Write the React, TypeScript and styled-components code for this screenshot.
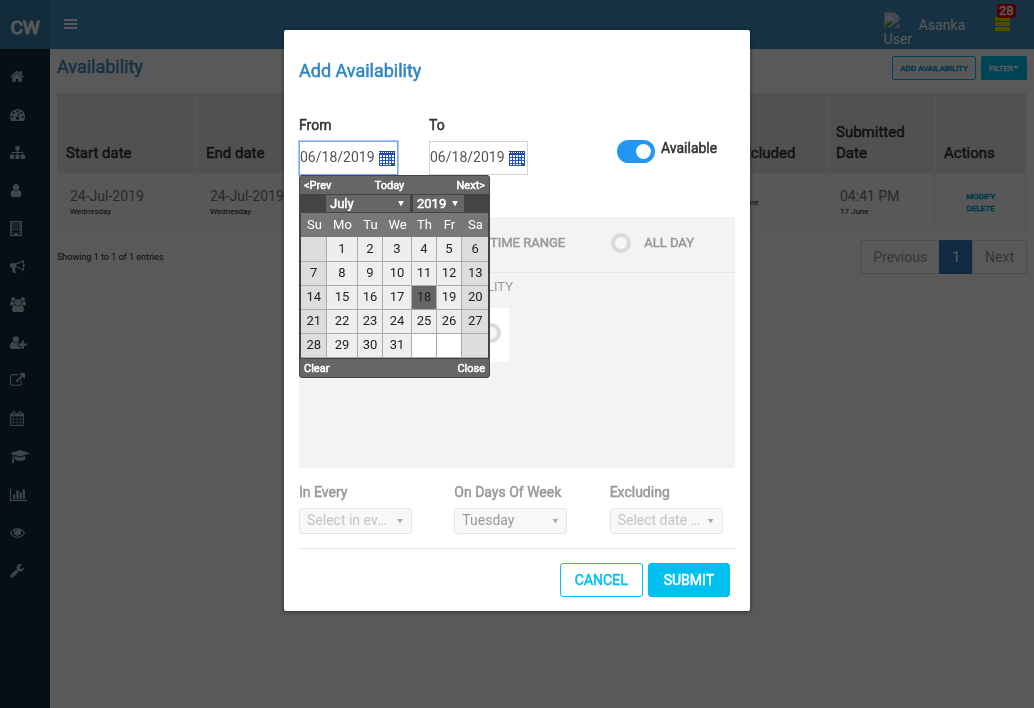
import React from 'react';
import styled, { createGlobalStyle, css } from 'styled-components';

const GlobalStyle = createGlobalStyle`
  *, *::before, *::after { box-sizing: border-box; }
  body {
    margin: 0;
    font-family: Roboto, "Liberation Sans", sans-serif;
    font-size: 14px;
    line-height: 20px;
    color: #333;
    background: #fff;
  }
  button, input, select { font-family: inherit; }
  a { text-decoration: none; }
`;

/* Regular weight thickened by a stroke, used for headings and labels. */
const heavy = css`
  -webkit-text-stroke: 0.5px currentColor;
`;

/* ---------- icons ---------- */

type Glyph = { box: string; w: number; d: string };

const glyphs: Record<string, Glyph> = {
  Home: { box: '64 0 1664 1792', w: 14, d: 'M1472 992v480q0 26-19 45t-45 19h-384v-384h-256v384h-384q-26 0-45-19t-19-45v-480q0-1 .5-3t.5-3l575-474 575 474q1 2 1 6zm223-69l-62 74q-8 9-21 11h-3q-13 0-21-7l-692-577-692 577q-12 8-24 7-13-2-21-11l-62-74q-8-10-7-23.5t11-21.5l719-599q32-26 76-26t76 26l244 204v-195q0-14 9-23t23-9h192q14 0 23 9t9 23v408l219 182q10 8 11 21.5t-7 23.5z' },
  Dashboard: { box: '0 0 1792 1792', w: 15, d: 'M384 1152q0-53-37.5-90.5t-90.5-37.5-90.5 37.5-37.5 90.5 37.5 90.5 90.5 37.5 90.5-37.5 37.5-90.5zm192-448q0-53-37.5-90.5t-90.5-37.5-90.5 37.5-37.5 90.5 37.5 90.5 90.5 37.5 90.5-37.5 37.5-90.5zm428 481l101-382q6-26-7.5-48.5t-38.5-29.5-48 6.5-30 39.5l-101 382q-60 5-107 43.5t-63 98.5q-20 77 20 146t117 89 146-20 89-117q16-60-6-117t-72-91zm660-33q0-53-37.5-90.5t-90.5-37.5-90.5 37.5-37.5 90.5 37.5 90.5 90.5 37.5 90.5-37.5 37.5-90.5zm-640-640q0-53-37.5-90.5t-90.5-37.5-90.5 37.5-37.5 90.5 37.5 90.5 90.5 37.5 90.5-37.5 37.5-90.5zm448 192q0-53-37.5-90.5t-90.5-37.5-90.5 37.5-37.5 90.5 37.5 90.5 90.5 37.5 90.5-37.5 37.5-90.5zm320 448q0 261-141 483-19 29-54 29h-1402q-35 0-54-29-141-221-141-483 0-182 71-348t191-286 286-191 348-71 348 71 286 191 191 286 71 348z' },
  Structure: { box: '0 0 1792 1792', w: 15, d: 'M1792 1248v320q0 40-28 68t-68 28h-320q-40 0-68-28t-28-68v-320q0-40 28-68t68-28h96v-192h-512v192h96q40 0 68 28t28 68v320q0 40-28 68t-68 28h-320q-40 0-68-28t-28-68v-320q0-40 28-68t68-28h96v-192h-512v192h96q40 0 68 28t28 68v320q0 40-28 68t-68 28h-320q-40 0-68-28t-28-68v-320q0-40 28-68t68-28h96v-192q0-52 38-90t90-38h512v-192h-96q-40 0-68-28t-28-68v-320q0-40 28-68t68-28h320q40 0 68 28t28 68v320q0 40-28 68t-68 28h-96v192h512q52 0 90 38t38 90v192h96q40 0 68 28t28 68z' },
  Profile: { box: '256 0 1280 1792', w: 12, d: 'M1536 1399q0 109-62.5 187t-150.5 78h-854q-88 0-150.5-78t-62.5-187q0-85 8.5-160.5t31.5-152 58.5-131 94-89 134.5-34.5q131 128 313 128t313-128q76 0 134.5 34.5t94 89 58.5 131 31.5 152 8.5 160.5zm-256-887q0 159-112.5 271.5t-271.5 112.5-271.5-112.5-112.5-271.5 112.5-271.5 271.5-112.5 271.5 112.5 112.5 271.5z' },
  Sites: { box: '192 0 1408 1792', w: 12, d: 'M192 0h1408v1792h-1408zM380 150v1500h324v-210q0-32 32-32h320q32 0 32 32v210h324v-1500zM448 256h150v150h-150zM704 256h150v150h-150zM960 256h150v150h-150zM1200 256h150v150h-150zM448 512h150v150h-150zM704 512h150v150h-150zM960 512h150v150h-150zM1200 512h150v150h-150zM448 768h150v150h-150zM704 768h150v150h-150zM960 768h150v150h-150zM1200 768h150v150h-150zM448 1024h150v150h-150zM704 1024h150v150h-150zM960 1024h150v150h-150zM1200 1024h150v150h-150zM448 1280h150v150h-150zM1200 1280h150v150h-150z' },
  Announcements: { box: '0 0 1792 1792', w: 15, d: 'M1664 640q53 0 90.5 37.5t37.5 90.5-37.5 90.5-90.5 37.5v384q0 52-38 90t-90 38q-417-347-812-380-58 19-91 66t-31 100.5 40 92.5q-20 33-23 65.5t6 58 33.5 55 48 50 61.5 50.5q-29 58-111.5 83t-168.5 11.5-132-55.5q-7-23-29.5-87.5t-32-94.5-23-89-15-101 3.5-98.5 22-110.5h-122q-66 0-113-47t-47-113v-192q0-66 47-113t113-47h480q435 0 896-384 52 0 90 38t38 90v384zm-128 604v-954q-394 302-768 343v270q377 42 768 341z' },
  Teams: { box: '0 0 1920 1792', w: 16, d: 'M593 896q-162 5-265 128h-134q-82 0-138-40.5t-56-118.5q0-353 124-353 6 0 43.5 21t97.5 42.5 119 21.5q67 0 133-23-5 37-5 66 0 159 81 256zm1071 637q0 120-73 189.5t-194 69.5h-874q-121 0-194-69.5t-73-189.5q0-53 3.5-103.5t14-109 26.5-108.5 43-97.5 62-81 85.5-53.5 111.5-20q10 0 43 21.5t73 48 107 48 135 21.5 135-21.5 107-48 73-48 43-21.5q61 0 111.5 20t85.5 53.5 62 81 43 97.5 26.5 108.5 14 109 3.5 103.5zm-1024-1277q0 106-75 181t-181 75-181-75-75-181 75-181 181-75 181 75 75 181zm704 384q0 159-112.5 271.5t-271.5 112.5-271.5-112.5-112.5-271.5 112.5-271.5 271.5-112.5 271.5 112.5 112.5 271.5zm576 225q0 78-56 118.5t-138 40.5h-134q-103-123-265-128 81-97 81-256 0-29-5-66 66 23 133 23 59 0 119-21.5t97.5-42.5 43.5-21q124 0 124 353zm-128-609q0 106-75 181t-181 75-181-75-75-181 75-181 181-75 181 75 75 181z' },
  Recruit: { box: '0 0 2048 1792', w: 17, d: 'M704 896q-159 0-271.5-112.5t-112.5-271.5 112.5-271.5 271.5-112.5 271.5 112.5 112.5 271.5-112.5 271.5-271.5 112.5zm960 128h352q13 0 22.5 9.5t9.5 22.5v192q0 13-9.5 22.5t-22.5 9.5h-352v352q0 13-9.5 22.5t-22.5 9.5h-192q-13 0-22.5-9.5t-9.5-22.5v-352h-352q-13 0-22.5-9.5t-9.5-22.5v-192q0-13 9.5-22.5t22.5-9.5h352v-352q0-13 9.5-22.5t22.5-9.5h192q13 0 22.5 9.5t9.5 22.5v352zm-736 224q0 52 38 90t90 38h256v238q-68 50-171 50h-874q-121 0-194-69t-73-190q0-53 3.5-103.5t14-109 26.5-108.5 43-97.5 62-81 85.5-53.5 111.5-20q19 0 39 17 79 61 154.5 91.5t164.5 30.5 164.5-30.5 154.5-91.5q20-17 39-17 132 0 217 96h-223q-52 0-90 38t-38 90v192z' },
  Links: { box: '0 0 1792 1792', w: 15, d: 'M1408 928v320q0 119-84.5 203.5t-203.5 84.5h-832q-119 0-203.5-84.5t-84.5-203.5v-832q0-119 84.5-203.5t203.5-84.5h704q14 0 23 9t9 23v64q0 14-9 23t-23 9h-704q-66 0-113 47t-47 113v832q0 66 47 113t113 47h832q66 0 113-47t47-113v-320q0-14 9-23t23-9h64q14 0 23 9t9 23zm384-864v512q0 26-19 45t-45 19-45-19l-176-176-652 652q-10 10-23 10t-23-10l-114-114q-10-10-10-23t10-23l652-652-176-176q-19-19-19-45t19-45 45-19h512q26 0 45 19t19 45z' },
  Calendar: { box: '64 0 1664 1792', w: 14, d: 'M192 1664h288v-288h-288v288zm352 0h320v-288h-320v288zm-352-352h288v-320h-288v320zm352 0h320v-320h-320v320zm-352-384h288v-288h-288v288zm736 736h320v-288h-320v288zm-384-736h320v-288h-320v288zm768 736h288v-288h-288v288zm-384-352h320v-320h-320v320zm-352-864v-288q0-13-9.5-22.5t-22.5-9.5h-64q-13 0-22.5 9.5t-9.5 22.5v288q0 13 9.5 22.5t22.5 9.5h64q13 0 22.5-9.5t9.5-22.5zm736 864h288v-320h-288v320zm-384-384h320v-288h-320v288zm384 0h288v-288h-288v288zm32-480v-288q0-13-9.5-22.5t-22.5-9.5h-64q-13 0-22.5 9.5t-9.5 22.5v288q0 13 9.5 22.5t22.5 9.5h64q13 0 22.5-9.5t9.5-22.5zm384-64v1280q0 52-38 90t-90 38h-1408q-52 0-90-38t-38-90v-1280q0-52 38-90t90-38h128v-96q0-66 47-113t113-47h64q66 0 113 47t47 113v96h384v-96q0-66 47-113t113-47h64q66 0 113 47t47 113v96h128q52 0 90 38t38 90z' },
  Training: { box: '0 0 2304 1792', w: 20, d: 'M1774 836l18 316q4 69-82 128t-235 93.5-323 34.5-323-34.5-235-93.5-82-128l18-316 574 181q22 7 48 7t48-7zm530-324q0 23-22 31l-1120 352q-4 1-10 1t-10-1l-652-206q-43 34-71 111.5t-34 178.5q63 36 63 109 0 69-58 107l58 433q2 14-8 25-9 11-24 11h-192q-15 0-24-11-10-11-8-25l58-433q-58-38-58-107 0-73 65-111 11-207 98-330l-333-104q-22-8-22-31t22-31l1120-352q4-1 10-1t10 1l1120 352q22 8 22 31z' },
  Reports: { box: '0 0 2048 1792', w: 17, d: 'M640 896v512h-256v-512h256zm384-512v1024h-256v-1024h256zm1024 1152v128h-2048v-1536h128v1408h1920zm-640-896v768h-256v-768h256zm384-384v1152h-256v-1152h256z' },
  Monitor: { box: '0 0 1792 1792', w: 15, d: 'M1664 960q-152-236-381-353 61 104 61 225 0 185-131.5 316.5t-316.5 131.5-316.5-131.5-131.5-316.5q0-121 61-225-229 117-381 353 133 205 333.5 326.5t434.5 121.5 434.5-121.5 333.5-326.5zm-720-384q0-20-14-34t-34-14q-125 0-214.5 89.5t-89.5 214.5q0 20 14 34t34 14 34-14 14-34q0-86 61-147t147-61q20 0 34-14t14-34zm848 384q0 34-20 69-140 230-376.5 368.5t-499.5 138.5-499.5-139-376.5-368q-20-35-20-69t20-69q140-229 376.5-368t499.5-139 499.5 139 376.5 368q20 35 20 69z' },
  Settings: { box: '64 0 1664 1792', w: 14, d: 'M448 1472q0-26-19-45t-45-19-45 19-19 45 19 45 45 19 45-19 19-45zm644-420l-682 682q-37 37-90 37-52 0-91-37l-106-108q-38-36-38-90 0-53 38-91l681-681q39 98 114.5 173.5t173.5 114.5zm634-435q0 39-23 106-47 134-164.5 217.5t-258.5 83.5q-185 0-316.5-131.5t-131.5-316.5 131.5-316.5 316.5-131.5q58 0 121.5 16.5t107.5 46.5q16 11 16 28t-16 28l-293 169v224l193 107q5-3 79-48.5t135.5-81 70.5-35.5q15 0 23.5 10t8.5 25z' },
};

const NavIcon = ({ glyph }: { glyph: Glyph }) => (
  <svg width={glyph.w} height="15" viewBox={glyph.box} fill="currentColor" fillRule="evenodd" aria-hidden="true">
    <path d={glyph.d} />
  </svg>
);

const MenuIcon = () => (
  <svg width="13" height="11" viewBox="0 0 13 11" fill="currentColor" aria-hidden="true">
    <rect width="13" height="2" /><rect y="4" width="13" height="2" /><rect y="8" width="13" height="2" />
  </svg>
);

const ServerIcon = () => (
  <svg width="15" height="14" viewBox="0 0 15 14" fill="#e6e600" aria-hidden="true">
    <rect width="15" height="4" rx="1" /><rect y="5" width="15" height="4" rx="1" /><rect y="10" width="15" height="4" rx="1" />
    <path d="M2 2.500h6M2 7.500h4M2 12.500h8M12 2.500h1M12 7.500h1M12 12.500h1" stroke="#a3b53a" strokeWidth="1" />
  </svg>
);

const MissingPicture = () => (
  <svg width="16" height="16" viewBox="0 0 16 16" aria-hidden="true">
    <path d="M.5 .5h10l5 5v10h-15z" fill="#c3d6f5" stroke="#a9a9a9" />
    <path d="M10.500 .5v5h5z" fill="#fff" stroke="#a9a9a9" />
    <path d="M3 6q1-3 3-1 2 0 2 2H3z" fill="#fff" />
    <path d="M1 15v-2q4-5 8-3l-5 5z" fill="#4aa52e" />
    <path d="M5 16l11-8v3l-6 5z" fill="#3c8dbc" />
    <path d="M10 15.500h5.500V12" fill="none" stroke="#a9a9a9" />
  </svg>
);

const DateIcon = () => (
  <svg width="16" height="16" viewBox="0 0 16 16" aria-hidden="true">
    <path d="M0 1h16v15H0z" fill="#2a50c8" />
    <path d="M0 1h16v4H0z" fill="#2444b4" />
    <path d="M1 .5h15M0 2.500h16" stroke="#fff" strokeDasharray="1 1" />
    <path d="M1 5h2v2H1zM4 5h2v2H4zM7 5h2v2H7zM10 5h2v2h-2zM13 5h2v2h-2zM1 8h2v2H1zM4 8h2v2H4zM7 8h2v2H7zM13 8h2v2h-2zM1 11h2v2H1zM4 11h2v2H4zM7 11h2v2H7zM10 11h2v2h-2zM13 11h2v2h-2zM1 14h2v1H1zM4 14h2v1H4zM7 14h2v1H7zM10 14h2v1h-2z" fill="#fff" />
    <path d="M10 8h2v2h-2z" fill="#3fd0ff" />
  </svg>
);

/* ---------- page ---------- */

const Page = styled.div`
  display: flex;
  min-height: 100vh;
`;

const Sidebar = styled.aside`
  flex: 0 0 50px;
  background: #122b40;
`;

const Logo = styled.div`
  height: 49px;
  padding: 7px 0 0;
  background: #367fa9;
  color: #fff;
  font-size: 19px;
  line-height: 41px;
  text-align: center;
  -webkit-text-stroke: 1px currentColor;
`;

const Nav = styled.nav`
  display: flex;
  flex-direction: column;
  padding-top: 8px;
`;

const NavLink = styled.a`
  display: flex;
  align-items: center;
  height: 38px;
  padding-left: 10px;
  color: #b8c7ce;
`;

const Main = styled.div`
  flex: 1;
  min-width: 0;
`;

const TopBar = styled.header`
  display: flex;
  align-items: flex-start;
  height: 49px;
  padding: 0 17px 0 14px;
  background: #3c8dbc;
  color: #fff;
`;

const MenuButton = styled.button`
  display: flex;
  margin: 19px auto 0 0;
  padding: 0;
  border: 0;
  background: none;
  color: #fff;
`;

const Avatar = styled.span`
  display: flex;
  flex-direction: column;
  width: 35px;
  margin-top: 12px;
  font-size: 14px;
  line-height: 22px;

  svg { display: block; }
`;

const UserName = styled.span`
  margin: 15px 30px 0 0;
  line-height: 20px;
`;

const Alerts = styled.a`
  position: relative;
  display: flex;
  width: 22px;
  margin-top: 17px;
`;

const Badge = styled.span`
  position: absolute;
  left: 2px;
  top: -13px;
  padding: 0 2px;
  border-radius: 3px;
  background: #e00000;
  color: #fff;
  font-size: 13px;
  line-height: 14px;
  ${heavy}
`;

const Content = styled.main`
  padding: 7px 7px 0;
`;

const TitleRow = styled.div`
  display: flex;
  align-items: flex-start;
  height: 37px;
  gap: 5px;
`;

const PageTitle = styled.h1`
  margin: 0 auto 0 0;
  color: #3c8dbc;
  font-size: 18px;
  font-weight: 400;
  line-height: 22px;
  ${heavy}
`;

const SmallButton = styled.button<{ $solid?: boolean }>`
  height: 24px;
  padding: 0 7px;
  border: 1px solid #00c0ef;
  border-radius: 2px;
  background: ${(p) => (p.$solid ? '#00c0ef' : 'transparent')};
  color: ${(p) => (p.$solid ? '#fff' : '#00a3d6')};
  font-size: 8px;
  ${heavy}
`;

const Caret = styled.span`
  display: inline-block;
  margin-bottom: 2px;
  border: 3px solid transparent;
  border-top-color: currentColor;
  border-bottom: 0;
`;

const Table = styled.table`
  width: 100%;
  table-layout: fixed;
  border-collapse: collapse;
`;

const Col = styled.col<{ $w?: number }>`
  width: ${(p) => (p.$w ? `${p.$w}px` : 'auto')};
`;

const Head = styled.th`
  height: 80px;
  padding: 0 8px 9px;
  border: 1px solid #f4f4f4;
  border-width: 0 2px 0 0;
  background: #e9e9e9;
  font-size: 15px;
  font-weight: 400;
  line-height: 21px;
  text-align: left;
  vertical-align: bottom;
  color: #333;
  ${heavy}

  &:first-child { padding-left: 9px; }
  &:last-child { border-right: 0; }
`;

const Cell = styled.td<{ $tight?: boolean }>`
  height: 57px;
  padding: 4px 0 0 ${(p) => (p.$tight ? 3 : 12)}px;
  border: 1px solid #f4f4f4;
  border-width: 0 2px 2px 0;
  background: #fbfbfb;
  color: #777;
  line-height: 17px;

  &:first-child { padding-left: 13px; }
  &:last-child { padding-left: 0; text-align: center; }
`;

const Minor = styled.div`
  color: #111;
  font-size: 8px;
  line-height: 14px;
`;

const RowAction = styled.a`
  display: block;
  color: #00a3e0;
  font-size: 8px;
  line-height: 12px;
  ${heavy}
`;

const TableFoot = styled.div`
  display: flex;
  justify-content: space-between;
  padding-top: 9px;
`;

const Summary = styled.p`
  margin: 7px 0 0;
  color: #222;
  font-size: 9px;
`;

const Pager = styled.nav`
  display: flex;
`;

const PageLink = styled.a<{ $current?: boolean }>`
  margin-left: -1px;
  padding: 6px 12px;
  border: 1px solid ${(p) => (p.$current ? '#337ab7' : '#ddd')};
  background: ${(p) => (p.$current ? '#337ab7' : 'transparent')};
  color: ${(p) => (p.$current ? '#fff' : '#999')};
`;

/* ---------- dialog ---------- */

const Backdrop = styled.div`
  position: fixed;
  inset: 0;
  display: flex;
  justify-content: center;
  align-items: flex-start;
  padding-top: 30px;
  background: rgba(0, 0, 0, 0.65);
`;

const Dialog = styled.div`
  width: 45%;
  min-width: 466px;
  padding: 30px 15px 14px;
  border-radius: 2px;
  background: #fff;
  box-shadow: 0 1px 4px rgba(0, 0, 0, 0.5);
`;

const DialogTitle = styled.h2`
  margin: 0 0 33px;
  color: #2e86c1;
  font-size: 18px;
  font-weight: 400;
  line-height: 22px;
  ${heavy}
`;

const DateRow = styled.div`
  display: grid;
  grid-template-columns: 130px 188px auto;
  align-items: start;
  margin-bottom: 42px;
`;

const Field = styled.div`
  position: relative;
`;

const Label = styled.label<{ $muted?: boolean }>`
  display: block;
  margin-bottom: 6px;
  color: ${(p) => (p.$muted ? '#999' : '#333')};
  ${heavy}
`;

const DateBox = styled.div<{ $active?: boolean }>`
  display: flex;
  align-items: center;
  width: 99px;
  height: 34px;
  border: 1px solid ${(p) => (p.$active ? '#7aa7f0' : '#d2d2e0')};
  outline: ${(p) => (p.$active ? '1px solid #a9c8f8' : '0')};
`;

const DateInput = styled.input`
  width: 79px;
  padding: 0 0 2px;
  border: 0;
  outline: 0;
  background: none;
  color: #555;
  font-size: 14px;
`;

const Toggle = styled.label`
  display: flex;
  align-items: flex-start;
  gap: 6px;
  padding-top: 25px;
  ${heavy}
`;

const ToggleInput = styled.input`
  appearance: none;
  display: flex;
  align-items: center;
  width: 38px;
  height: 23px;
  margin: 0;
  padding: 4px;
  border-radius: 12px;
  background: #2196f3;

  &::before {
    content: '';
    width: 15px;
    height: 15px;
    margin-left: 15px;
    border-radius: 50%;
    background: #fff;
  }
`;

const ToggleText = styled.span`
  line-height: 17px;
`;

const Panel = styled.section`
  height: 251px;
  background: #f3f3f3;
  color: #999;
`;

const ModeRow = styled.div`
  display: flex;
  justify-content: flex-end;
  align-items: center;
  gap: 46px;
  height: 56px;
  padding: 0 41px 4px 0;
  border-bottom: 1px solid #e6e6e6;
`;

const Mode = styled.label`
  display: flex;
  align-items: center;
  gap: 13px;
  font-size: 13px;
  ${heavy}
`;

const Radio = styled.input`
  appearance: none;
  width: 20px;
  height: 20px;
  margin: 0;
  border: 4px solid #d6dcde;
  border-radius: 50%;
  background: #f6f6f6;
`;

const SlotArea = styled.div`
  display: flex;
  flex-direction: column;
  align-items: flex-end;
  width: 214px;
  padding-top: 4px;
  font-size: 13px;
`;

const SlotCard = styled.label`
  display: flex;
  align-items: center;
  justify-content: flex-end;
  width: 120px;
  height: 54px;
  margin: 11px 4px 0 0;
  padding: 0 8px 4px 0;
  background: #fff;
`;

const RepeatRow = styled.div`
  display: grid;
  grid-template-columns: repeat(3, 1fr);
  margin-right: -30px;
  padding: 14px 0;
`;

const SelectWrap = styled.div`
  display: flex;
  align-items: center;
  width: 113px;
  height: 26px;
  border: 1px solid #e6e6e6;
  border-radius: 3px;
  background: #f8f8f8;
  color: #aaa;
`;

const Select = styled.select<{ $faint?: boolean }>`
  appearance: none;
  flex: 0 0 90px;
  width: 90px;
  height: 24px;
  padding: 0 0 2px 7px;
  border: 0;
  background: none;
  color: ${(p) => (p.$faint ? '#c4c4c4' : '#999')};
  font-size: 14px;
  opacity: 1;
  overflow: hidden;
  text-overflow: ellipsis;
  white-space: nowrap;
`;

const Arrow = styled.span<{ $light?: boolean }>`
  width: 6px;
  height: ${(p) => (p.$light ? 6 : 5)}px;
  margin-left: ${(p) => (p.$light ? 0 : 7)}px;
  background: ${(p) => (p.$light ? '#fff' : '#aaa')};
  clip-path: polygon(0 0, 100% 0, 50% 100%);
`;

const DialogFoot = styled.footer`
  display: flex;
  justify-content: flex-end;
  gap: 5px;
  padding: 14px 5px 0 0;
  border-top: 1px solid #e3e3e3;
`;

const Button = styled.button<{ $solid?: boolean }>`
  height: 34px;
  padding: 0 ${(p) => (p.$solid ? 15 : 14)}px;
  border: 1px solid #00c0ef;
  border-radius: 3px;
  background: ${(p) => (p.$solid ? '#00c0ef' : '#fff')};
  color: ${(p) => (p.$solid ? '#fff' : '#00c0ef')};
  font-size: 14px;
  ${heavy}
`;

/* ---------- date picker ---------- */

const Picker = styled.div`
  position: absolute;
  top: 60px;
  left: 0;
  z-index: 1;
  width: 191px;
  border: 1px solid #444;
  border-radius: 3px;
  background: #444;
  overflow: hidden;
`;

const PickerBar = styled.div`
  display: grid;
  grid-template-columns: 55px 1fr 55px;
  height: 18px;
  padding: 0 4px;
  background: #666;
`;

const PickerLink = styled.button<{ $align?: string }>`
  padding: ${(p) => (p.$align === 'center' ? '0 10px 0 0' : '0')};
  border: 0;
  background: none;
  color: #fff;
  font-size: 11px;
  line-height: 20px;
  text-align: ${(p) => p.$align ?? 'left'};
  ${heavy}

  &:last-child { grid-column: 3; }
`;

const PickerSelects = styled.div`
  display: flex;
  gap: 3px;
  height: 19px;
  padding: 1px 0 1px 26px;
`;

const PickerSelectWrap = styled.div<{ $w: number }>`
  display: flex;
  align-items: center;
  width: ${(p) => p.$w}px;
  padding-right: 6px;
  background: #666;
`;

const PickerSelect = styled.select`
  appearance: none;
  flex: 1;
  min-width: 0;
  height: 17px;
  padding: 0 0 0 4px;
  border: 0;
  background: none;
  color: #fff;
  font-size: 13px;
  ${heavy}
`;

const Days = styled.table`
  width: 187px;
  margin: 0 1px 1px;
  table-layout: fixed;
  border-collapse: collapse;
  background: #fff;
`;

const DayName = styled.th`
  height: 24px;
  padding: 0 0 0 2px;
  background: #777;
  color: #fff;
  font-size: 13px;
  font-weight: 400;
`;

const Day = styled.td<{ $off?: boolean; $blank?: boolean; $picked?: boolean }>`
  height: 24px;
  padding: 0 0 0 1px;
  border: 1px solid #aaa;
  border-width: 0 0 1px 1px;
  background: ${(p) => (p.$picked ? '#666' : p.$off ? '#ddd' : p.$blank ? '#fff' : '#eee')};
  color: #222;
  font-size: 13px;
  text-align: center;

  &:first-child { border-left: 0; }
`;

const weeks = Array.from({ length: 5 }, (_, w) => Array.from({ length: 7 }, (_, d) => w * 7 + d));

const DatePicker = () => (
  <Picker>
    <PickerBar>
      <PickerLink>&lt;Prev</PickerLink>
      <PickerLink $align="center">Today</PickerLink>
      <PickerLink $align="right">Next&gt;</PickerLink>
    </PickerBar>
    <PickerSelects>
      <PickerSelectWrap $w={84}>
        <PickerSelect aria-label="Month"><option>July</option></PickerSelect>
        <Arrow $light />
      </PickerSelectWrap>
      <PickerSelectWrap $w={51}>
        <PickerSelect aria-label="Year"><option>2019</option></PickerSelect>
        <Arrow $light />
      </PickerSelectWrap>
    </PickerSelects>
    <Days>
      <colgroup>
        {[25, 31, 25, 29, 25, 25, 27].map((w, i) => <Col key={i} $w={w} />)}
      </colgroup>
      <thead>
        <tr>{['Su', 'Mo', 'Tu', 'We', 'Th', 'Fr', 'Sa'].map((d) => <DayName key={d}>{d}</DayName>)}</tr>
      </thead>
      <tbody>
        {weeks.map((week, i) => (
          <tr key={i}>
            {week.map((n, d) => (
              <Day key={n} $off={d === 0 || d === 6} $blank={n > 31} $picked={n === 18}>
                {n > 0 && n <= 31 ? n : null}
              </Day>
            ))}
          </tr>
        ))}
      </tbody>
    </Days>
    <PickerBar>
      <PickerLink>Clear</PickerLink>
      <PickerLink $align="right">Close</PickerLink>
    </PickerBar>
  </Picker>
);

const repeatFields = [
  { id: 'every', label: 'In Every', value: 'Select in every week', faint: true },
  { id: 'days', label: 'On Days Of Week', value: 'Tuesday', faint: false },
  { id: 'excluding', label: 'Excluding', value: 'Select date range', faint: true },
];

export default function App() {
  return (
    <>
      <GlobalStyle />
      <Page>
        <Sidebar>
          <Logo>CW</Logo>
          <Nav>
            {Object.entries(glyphs).map(([name, glyph]) => (
              <NavLink key={name} href="#" aria-label={name}><NavIcon glyph={glyph} /></NavLink>
            ))}
          </Nav>
        </Sidebar>
        <Main>
          <TopBar>
            <MenuButton aria-label="Toggle menu"><MenuIcon /></MenuButton>
            <Avatar><MissingPicture />User</Avatar>
            <UserName>Asanka</UserName>
            <Alerts href="#" aria-label="Alerts"><ServerIcon /><Badge>28</Badge></Alerts>
          </TopBar>
          <Content>
            <TitleRow>
              <PageTitle>Availability</PageTitle>
              <SmallButton>ADD AVAILABILITY</SmallButton>
              <SmallButton $solid>FILTER<Caret /></SmallButton>
            </TitleRow>
            <Table>
              <colgroup>
                <Col $w={140} /><Col $w={140} /><Col /><Col $w={101} /><Col $w={108} /><Col $w={91} />
              </colgroup>
              <thead>
                <tr>
                  <Head>Start date</Head><Head>End date</Head><Head /><Head>Excluded</Head>
                  <Head>Submitted Date</Head><Head>Actions</Head>
                </tr>
              </thead>
              <tbody>
                <tr>
                  <Cell>24-Jul-2019<Minor>Wednesday</Minor></Cell>
                  <Cell>24-Jul-2019<Minor>Wednesday</Minor></Cell>
                  <Cell />
                  <Cell $tight><Minor>17 June</Minor></Cell>
                  <Cell>04:41 PM<Minor>17 June</Minor></Cell>
                  <Cell><RowAction href="#">MODIFY</RowAction><RowAction href="#">DELETE</RowAction></Cell>
                </tr>
              </tbody>
            </Table>
            <TableFoot>
              <Summary>Showing 1 to 1 of 1 entries</Summary>
              <Pager>
                <PageLink href="#">Previous</PageLink>
                <PageLink href="#" $current>1</PageLink>
                <PageLink href="#">Next</PageLink>
              </Pager>
            </TableFoot>
          </Content>
        </Main>
      </Page>
      <Backdrop>
        <Dialog role="dialog" aria-labelledby="dialog-title">
          <DialogTitle id="dialog-title">Add Availability</DialogTitle>
          <DateRow>
            <Field>
              <Label htmlFor="from">From</Label>
              <DateBox $active><DateInput id="from" defaultValue="06/18/2019" /><DateIcon /></DateBox>
              <DatePicker />
            </Field>
            <Field>
              <Label htmlFor="to">To</Label>
              <DateBox><DateInput id="to" defaultValue="06/18/2019" /><DateIcon /></DateBox>
            </Field>
            <Toggle>
              <ToggleInput type="checkbox" defaultChecked />
              <ToggleText>Available</ToggleText>
            </Toggle>
          </DateRow>
          <Panel>
            <ModeRow>
              <Mode><Radio type="radio" name="mode" />TIME RANGE</Mode>
              <Mode><Radio type="radio" name="mode" />ALL DAY</Mode>
            </ModeRow>
            <SlotArea>
              AVAILABILITY
              <SlotCard><Radio type="radio" name="slot" aria-label="Slot" /></SlotCard>
            </SlotArea>
          </Panel>
          <RepeatRow>
            {repeatFields.map((f) => (
              <Field key={f.id}>
                <Label $muted htmlFor={f.id}>{f.label}</Label>
                <SelectWrap>
                  <Select id={f.id} disabled $faint={f.faint}><option>{f.value}</option></Select>
                  <Arrow />
                </SelectWrap>
              </Field>
            ))}
          </RepeatRow>
          <DialogFoot>
            <Button>CANCEL</Button>
            <Button $solid>SUBMIT</Button>
          </DialogFoot>
        </Dialog>
      </Backdrop>
    </>
  );
}
